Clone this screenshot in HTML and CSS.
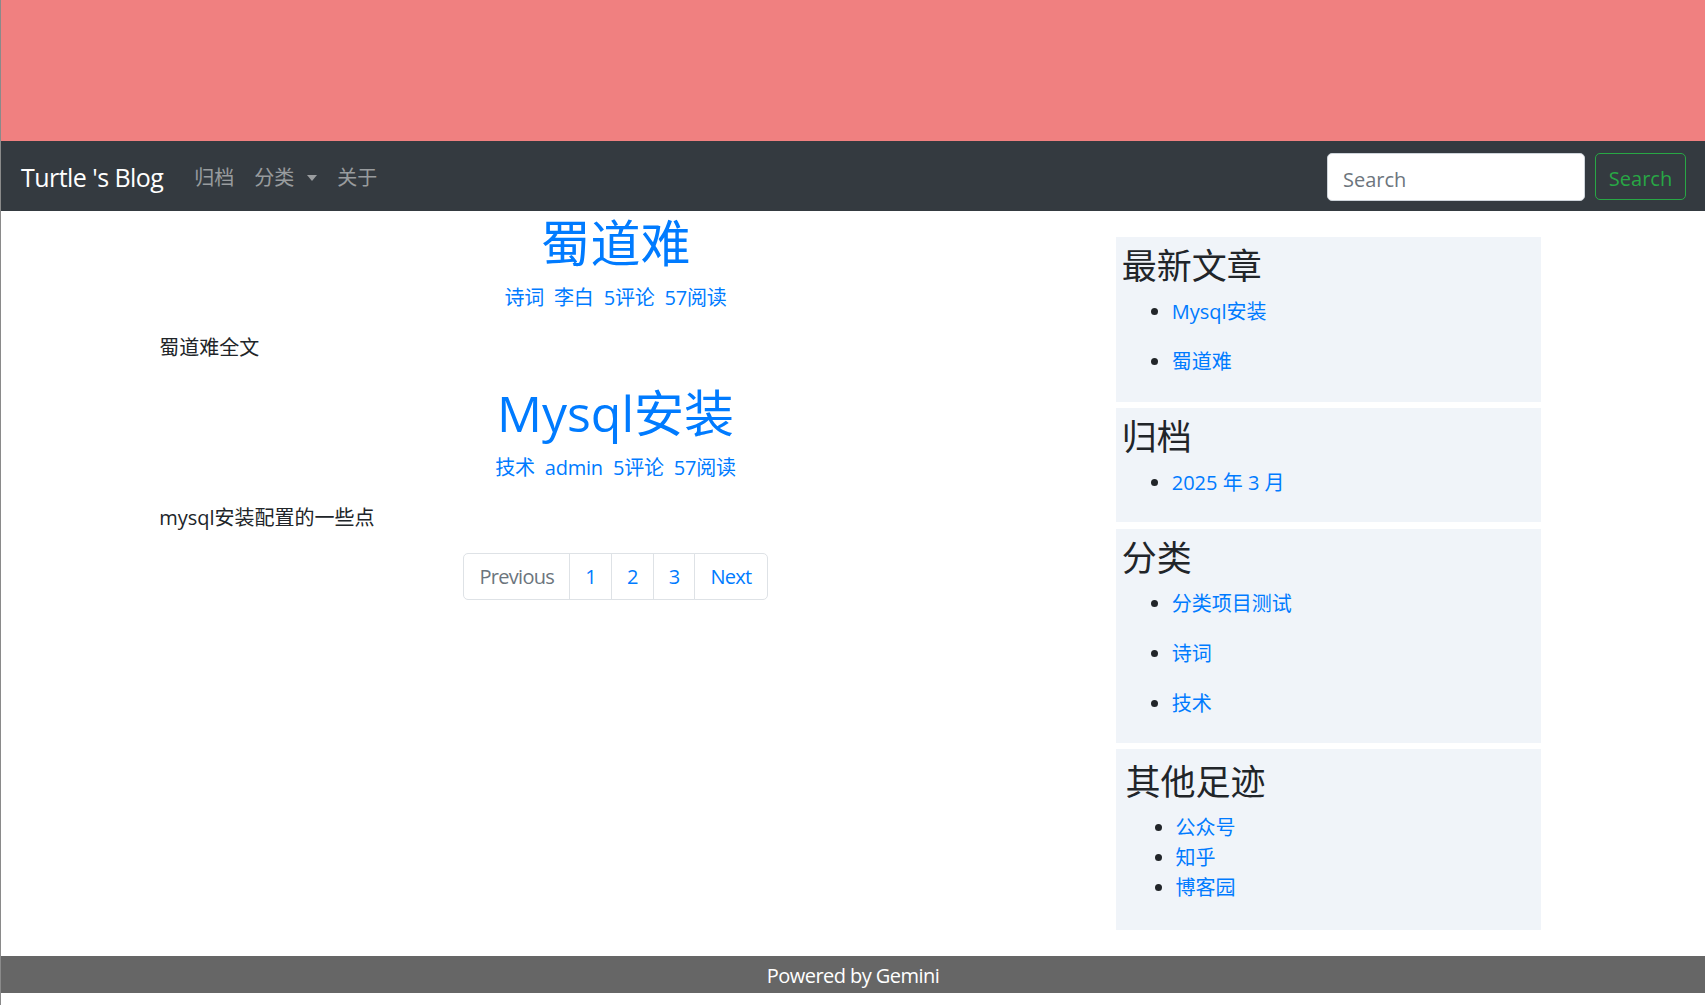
FILE: index.html
```html
<!DOCTYPE html>
<html lang="zh-CN">
<head>
<meta charset="utf-8">
<title>Turtle 's Blog</title>
<link rel="stylesheet" href="styles.css">
</head>
<body>
<div class="banner"></div>
<nav class="navbar">
  <a class="brand" href="#">Turtle 's Blog</a>
  <ul class="nav">
    <li><a class="nav-link" href="#">归档</a></li>
    <li><a class="nav-link dropdown" href="#">分类<span class="caret"></span></a></li>
    <li><a class="nav-link" href="#">关于</a></li>
  </ul>
  <form class="search">
    <input class="search-input" type="search" placeholder="Search">
    <button class="search-btn" type="button">Search</button>
  </form>
</nav>

<div class="container">
  <main class="main">
    <article class="post">
      <h1 class="post-title"><a href="#">蜀道难</a></h1>
      <div class="post-meta">
        <a href="#">诗词</a><a href="#">李白</a><a href="#">5评论</a><a href="#">57阅读</a>
      </div>
      <p class="post-summary">蜀道难全文</p>
    </article>
    <article class="post">
      <h1 class="post-title"><a href="#">Mysql安装</a></h1>
      <div class="post-meta">
        <a href="#">技术</a><a href="#">admin</a><a href="#">5评论</a><a href="#">57阅读</a>
      </div>
      <p class="post-summary">mysql安装配置的一些点</p>
    </article>
    <ul class="pagination">
      <li><span class="page-link disabled">Previous</span></li>
      <li><a class="page-link" href="#">1</a></li>
      <li><a class="page-link" href="#">2</a></li>
      <li><a class="page-link" href="#">3</a></li>
      <li><a class="page-link" href="#">Next</a></li>
    </ul>
  </main>

  <aside class="sidebar">
    <section class="widget">
      <h3>最新文章</h3>
      <ul class="spaced">
        <li><a href="#">Mysql安装</a></li>
        <li><a href="#">蜀道难</a></li>
      </ul>
    </section>
    <section class="widget">
      <h3>归档</h3>
      <ul class="spaced">
        <li><a href="#">2025 年 3 月</a></li>
      </ul>
    </section>
    <section class="widget">
      <h3>分类</h3>
      <ul class="spaced">
        <li><a href="#">分类项目测试</a></li>
        <li><a href="#">诗词</a></li>
        <li><a href="#">技术</a></li>
      </ul>
    </section>
    <section class="widget widget-other">
      <h3>其他足迹</h3>
      <ul class="tight">
        <li><a href="#">公众号</a></li>
        <li><a href="#">知乎</a></li>
        <li><a href="#">博客园</a></li>
      </ul>
    </section>
  </aside>
</div>

<footer class="footer">Powered by Gemini</footer>
</body>
</html>
```

FILE: styles.css
```css
* { box-sizing: border-box; }

html { background: #fff; }

body {
  margin: 0;
  border-left: 1px solid #8a8a8a;
  font-family: "Open Sans", "Noto Sans CJK SC", sans-serif;
  font-size: 20px;
  line-height: 1.5;
  color: #212529;
  background: #fff;
  min-height: 1005px;
}

a { color: #007bff; text-decoration: none; }

.banner {
  height: 141px;
  background: #f08080;
}

/* navbar */
.navbar {
  height: 70px;
  background: #343a40;
  display: flex;
  align-items: center;
  padding: 0 19px 0 20px;
}

.brand {
  color: #fff;
  font-size: 25px;
  line-height: 1.5;
  letter-spacing: -0.55px;
  margin: 4px 20px 0 0;
  white-space: nowrap;
}

.nav {
  list-style: none;
  margin: 4px 0 0 1px;
  padding: 0;
  display: flex;
  flex: 1;
}

.nav-link {
  display: flex;
  align-items: center;
  padding: 8px 10px;
  color: rgba(255, 255, 255, 0.5);
  font-size: 20px;
}

.caret {
  display: inline-block;
  margin-left: 13px;
  margin-right: 0;
  border-top: 6px solid rgba(255, 255, 255, 0.5);
  border-left: 5.5px solid transparent;
  border-right: 5.5px solid transparent;
  margin-top: 0;
}

.search {
  display: flex;
  align-items: center;
  gap: 10px;
  margin-top: 1px;
}

.search-input {
  width: 258px;
  height: 48px;
  padding: 10px 15px 4px;
  font-family: inherit;
  font-size: 20px;
  color: #495057;
  background: #fff;
  border: 1px solid #ced4da;
  border-radius: 5px;
  outline: none;
}

.search-input::placeholder { color: #6c757d; }

.search-btn {
  width: 91px;
  height: 47px;
  padding: 3px 0 0;
  font-family: inherit;
  font-size: 20px;
  color: #28a745;
  background: transparent;
  border: 1px solid #28a745;
  border-radius: 5px;
}

/* layout */
.container {
  width: 1425px;
  margin: 0 auto;
  display: flex;
  align-items: flex-start;
}

.main {
  flex: 0 0 950px;
  padding: 2px 18.75px 0;
}

.sidebar {
  flex: 0 0 475px;
  padding: 19.75px 18.75px 0;
}

/* posts */
.post-title {
  margin: 0 0 10px;
  text-align: center;
  font-size: 50px;
  font-weight: 400;
  line-height: 1.2;
}

.post-meta {
  display: flex;
  justify-content: center;
  gap: 10px;
  margin-bottom: 20px;
  letter-spacing: -0.2px;
}

.post-summary {
  margin: 0 0 20px;
}

/* pagination */
.pagination {
  list-style: none;
  display: flex;
  justify-content: center;
  margin: 0 0 20px;
  padding: 0;
}

.page-link {
  display: block;
  padding: 10px 15px 10px;
  line-height: 1.25;
  border: 1px solid #dee2e6;
  margin-left: -1px;
  background: #fff;
  color: #007bff;
  letter-spacing: -0.7px;
}

.pagination li:first-child .page-link {
  margin-left: 0;
  border-radius: 5px 0 0 5px;
}

.pagination li:last-child .page-link {
  border-radius: 0 5px 5px 0;
}

.page-link.disabled { color: #6c757d; }

/* sidebar widgets */
.widget {
  margin: 6.25px;
  padding: 8.25px 6.25px 4.25px;
  background: #f0f4f9;
}

.widget h3 {
  margin: 0 0 10px;
  font-size: 35px;
  font-weight: 400;
  line-height: 1.2;
}

.widget ul {
  margin: 0;
  padding-left: 50px;
}

.spaced li { margin-bottom: 20px; }

.widget-other {
  padding: 12px 10px 7px;
}

.widget-other ul { margin-bottom: 20px; }

/* footer */
.footer {
  margin-top: 19px;
  height: 37.5px;
  padding-top: 2px;
  line-height: 35.5px;
  background: #666;
  color: #fff;
  text-align: center;
  font-size: 20px;
  letter-spacing: -0.55px;
}
```
